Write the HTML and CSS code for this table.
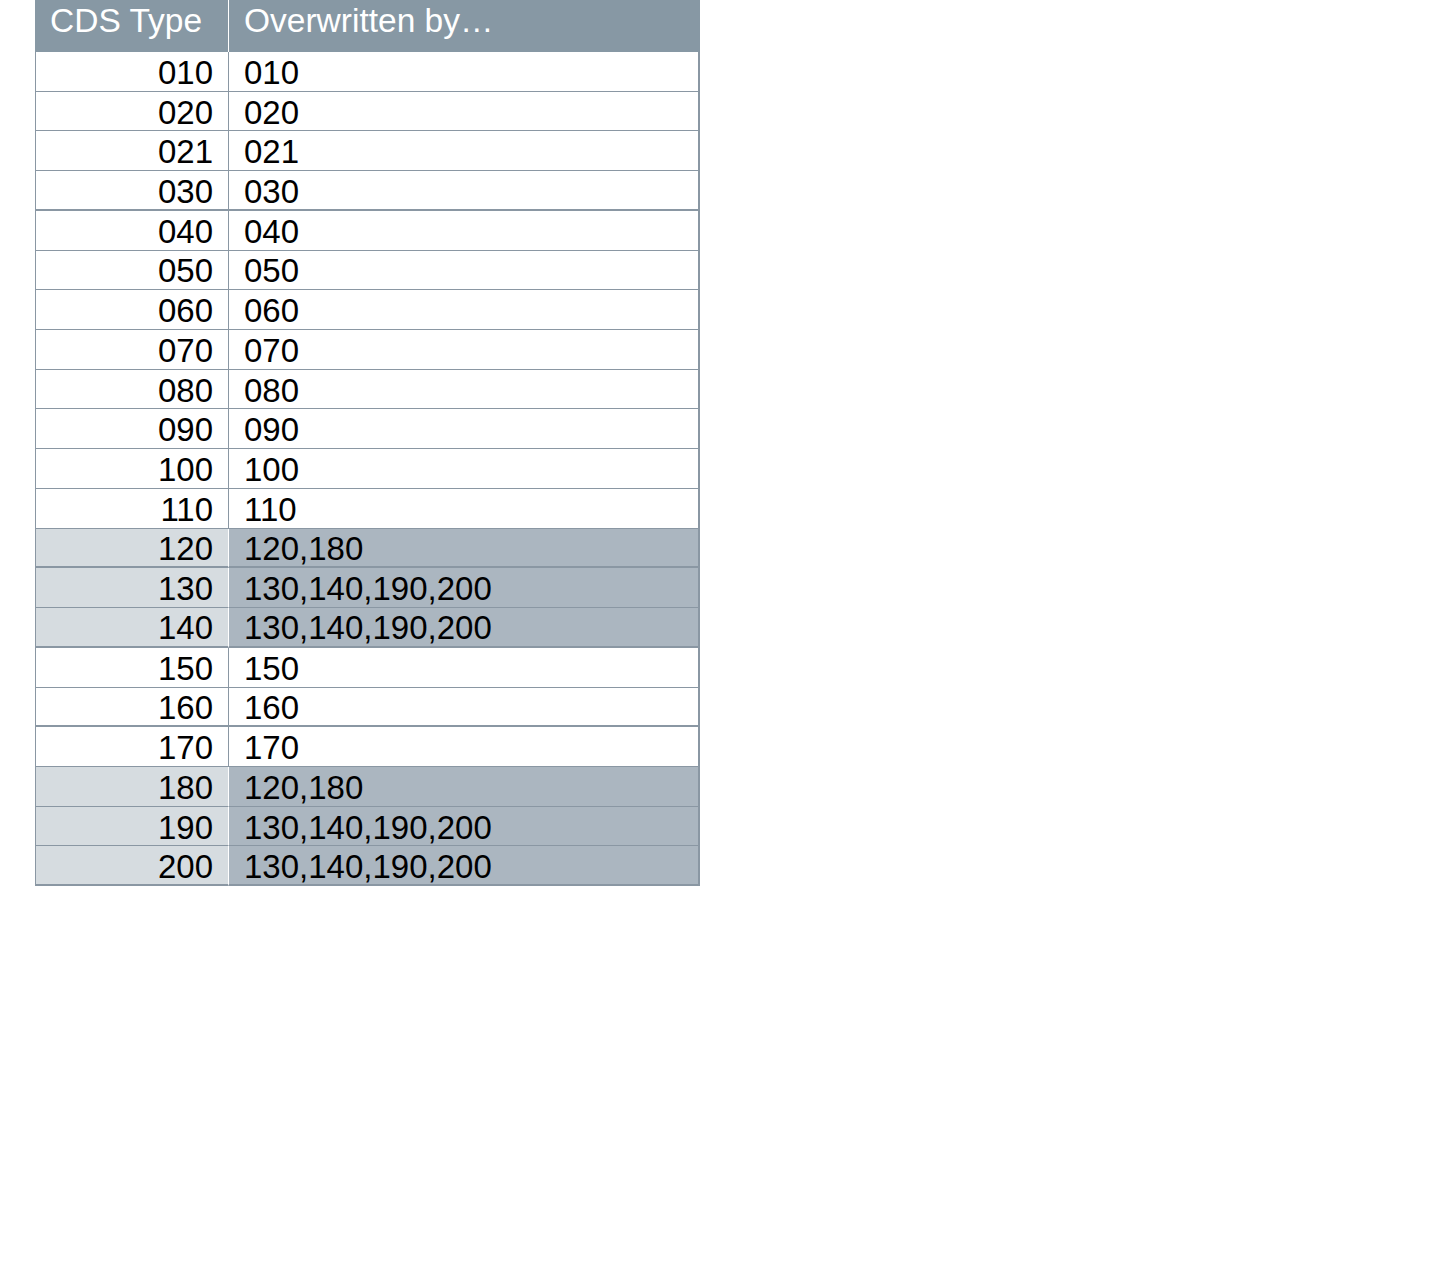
FILE: index.html
```html
<!DOCTYPE html>
<html lang="en">
<head>
<meta charset="utf-8">
<title>CDS Type</title>
<link rel="stylesheet" href="styles.css">
</head>
<body>
<table class="cds">
  <thead>
    <tr class="head"><th class="c1">CDS Type</th><th class="c2">Overwritten by…</th></tr>
  </thead>
  <tbody>
    <tr><td class="c1">010</td><td class="c2">010</td></tr>
    <tr><td class="c1">020</td><td class="c2">020</td></tr>
    <tr><td class="c1">021</td><td class="c2">021</td></tr>
    <tr class="thick"><td class="c1">030</td><td class="c2">030</td></tr>
    <tr><td class="c1">040</td><td class="c2">040</td></tr>
    <tr><td class="c1">050</td><td class="c2">050</td></tr>
    <tr><td class="c1">060</td><td class="c2">060</td></tr>
    <tr><td class="c1">070</td><td class="c2">070</td></tr>
    <tr><td class="c1">080</td><td class="c2">080</td></tr>
    <tr><td class="c1">090</td><td class="c2">090</td></tr>
    <tr><td class="c1">100</td><td class="c2">100</td></tr>
    <tr><td class="c1">110</td><td class="c2">110</td></tr>
    <tr class="hl thick"><td class="c1">120</td><td class="c2">120,180</td></tr>
    <tr class="hl"><td class="c1">130</td><td class="c2">130,140,190,200</td></tr>
    <tr class="hl thick"><td class="c1">140</td><td class="c2">130,140,190,200</td></tr>
    <tr><td class="c1">150</td><td class="c2">150</td></tr>
    <tr class="thick"><td class="c1">160</td><td class="c2">160</td></tr>
    <tr><td class="c1">170</td><td class="c2">170</td></tr>
    <tr class="hl"><td class="c1">180</td><td class="c2">120,180</td></tr>
    <tr class="hl"><td class="c1">190</td><td class="c2">130,140,190,200</td></tr>
    <tr class="hl last"><td class="c1">200</td><td class="c2">130,140,190,200</td></tr>
  </tbody>
</table>
</body>
</html>
```
FILE: styles.css
```css
html, body {
  margin: 0;
  padding: 0;
  background: #ffffff;
}

.cds {
  margin-left: 35px;
  border-collapse: separate;
  border-spacing: 0;
  width: 665px;
  font-family: "Liberation Sans", Arial, sans-serif;
  font-size: 33px;
  color: #000000;
  table-layout: fixed;
}

.cds .head {
  height: 52px;
}

.cds th {
  background: #8798a4;
  color: #ffffff;
  font-weight: normal;
  font-size: 33.5px;
  text-align: left;
  vertical-align: middle;
  padding: 0 14px 10px 15px;
  line-height: 1;
  white-space: nowrap;
}

.cds th.c1 {
  width: 164px;
  border-right: 1px solid #ffffff;
}

.cds tbody tr {
  height: 39.72px;
}

.cds td {
  padding: 2px 15px 0 15px;
  line-height: 1;
  vertical-align: middle;
  border-bottom: 1px solid #8a97a3;
  white-space: nowrap;
}

.cds td.c1 {
  text-align: right;
  border-left: 1px solid #8a97a3;
  border-right: 1px solid #8a97a3;
}

.cds td.c2 {
  text-align: left;
  border-right: 2px solid #8a97a3;
}

.cds tr.thick td {
  border-bottom-width: 2px;
}

.cds tr.hl td.c1 {
  background: #d6dce0;
  border-right-color: #ffffff;
}

.cds tr.hl td.c2 {
  background: #abb6c0;
}

.cds tr.last td {
  border-bottom-width: 2px;
}
```
